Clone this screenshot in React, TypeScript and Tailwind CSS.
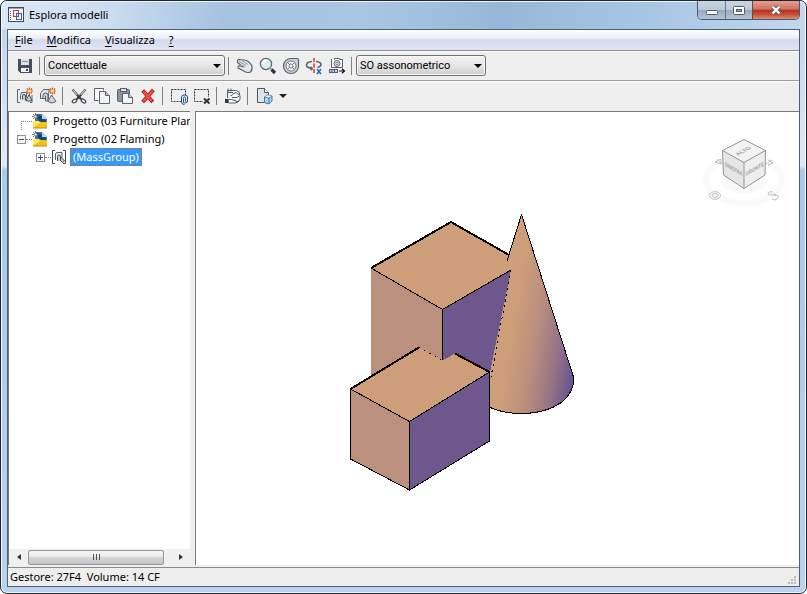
import type { ReactNode } from "react";

// ── Toolbar icons ────────────────────────────────────────────────────────

function Icon({ children, crisp = false }: { children: ReactNode; crisp?: boolean }) {
  return (
    <svg width="18" height="18" viewBox="0 0 18 18" fill="none" shapeRendering={crisp ? "crispEdges" : "auto"} aria-hidden="true">
      {children}
    </svg>
  );
}

function Spark() {
  return (
    <g>
      <path d="M13.5 0.5v7M10 4h7M11 1.5l5 5M16 1.5l-5 5" stroke="#e8501c" strokeWidth="1.2" />
      <rect x="12" y="2.5" width="3" height="3" fill="#ffe27a" />
    </g>
  );
}

const SaveIcon = () => (
  <Icon crisp>
    <path d="M2 2h14v14H4l-2-2z" fill="#474e5e" />
    <rect x="5" y="2" width="8" height="6" fill="#dde1e7" />
    <rect x="6" y="4" width="6" height="1" fill="#8c93a0" />
    <rect x="5" y="11" width="8" height="4" fill="#f2f4f7" />
    <rect x="10" y="12" width="2" height="2" fill="#3b4252" />
  </Icon>
);

const MassGroupIcon = () => (
  <Icon>
    <path d="M4 2.500H1.500v13H4M14 15.500h2V8" stroke="#59616e" />
    <path d="M4.500 12.500V8.500l1-3h5v5" stroke="#59616e" fill="#dfe4ea" />
    <path d="M6.500 12.500V9q0-1.500 1.500-1.500T9.500 9v4.500M10 13.500l3-6 3 6q-3 1.500-6 0z" stroke="#4b5360" fill="#c4cad2" />
    <Spark />
  </Icon>
);

const MassElementIcon = () => (
  <Icon>
    <path d="M1.500 11.500v-5l3-4h6l-1 4v5z" stroke="#59616e" fill="#e3e7ec" />
    <path d="M4 12V8.500Q4 6 6.500 6T9 8.500V14H6.500V9" stroke="#59616e" fill="#c8ced6" />
    <path d="M12.500 8 17 14.500q-4 3-8 0z" stroke="#59616e" fill="#d2d7de" />
    <Spark />
  </Icon>
);

const CutIcon = () => (
  <Icon>
    <path d="M2.500 2.500 11 12M15.500 2.500 7 12" stroke="#5b626e" strokeWidth="2.400" />
    <path d="M3 3l7 8M15 3l-7 8" stroke="#e6e8eb" strokeWidth="0.900" />
    <path d="m7 8 5 5M11 8l-5 5" stroke="#333944" strokeWidth="1.600" />
    <ellipse cx="4.500" cy="14" rx="2.500" ry="1.600" stroke="#454b57" strokeWidth="1.200" transform="rotate(-35 4.500 14)" />
    <ellipse cx="13.500" cy="14" rx="2.500" ry="1.600" stroke="#454b57" strokeWidth="1.200" transform="rotate(35 13.500 14)" />
  </Icon>
);

const CopyIcon = () => (
  <Icon>
    <path d="M5.500 13.500h-4v-12h9v2" stroke="#59616e" fill="#fff" />
    <path d="M6.500 4.500h6l4 4v8h-10z" stroke="#59616e" fill="#f1f3f6" />
    <path d="M12.500 4.500v4h4" stroke="#59616e" fill="#c2c8d0" />
  </Icon>
);

const PasteIcon = () => (
  <Icon>
    <rect x="1.500" y="2.500" width="12" height="12" rx="1" stroke="#59616e" fill="#8d949e" />
    <rect x="4.500" y="1.500" width="6" height="3" stroke="#59616e" fill="#dfe3e8" />
    <path d="M6.500 6.500h6l4 4v6h-10z" stroke="#59616e" fill="#f1f3f6" />
    <path d="M12.500 6.500v4h4" stroke="#59616e" fill="#c2c8d0" />
  </Icon>
);

const DeleteIcon = () => (
  <Icon>
    <path d="M5 5l7.500 8.500M13 4.500 5 13.500" stroke="#b3140e" strokeWidth="3.800" strokeLinecap="square" />
    <path d="M5 5l7.500 8.500M13 4.500 5 13.500" stroke="#f0524a" strokeWidth="2" strokeLinecap="square" />
  </Icon>
);

const SelectIcon = () => (
  <Icon>
    <rect x="1.500" y="2.500" width="14" height="12" stroke="#2f3440" strokeDasharray="2 1" />
    <rect x="11" y="8" width="7" height="10" fill="#efefef" />
    <path d="M15.500 14.500v-3q0-1.500-1-1.500t-1 1.500v3.500q0 1 1 1t3-1V10q0-2-3-2t-3 2v5q0 2.500 3 2.500" stroke="#1c4f8f" />
  </Icon>
);

const DeselectIcon = () => (
  <Icon>
    <rect x="1.500" y="2.500" width="14" height="12" stroke="#2f3440" strokeDasharray="2 1" />
    <rect x="10" y="10" width="8" height="8" fill="#efefef" />
    <path d="m11 11.500 5.500 5M16.500 11.500l-5.500 5" stroke="#333" strokeWidth="2" />
  </Icon>
);

const PropertiesIcon = () => (
  <Icon>
    <path d="M3.500 11V3.500h9l3 2v8l-2 2H8" stroke="#59616e" fill="#edf0f3" />
    <path d="M4 1.500v4M7 1.500v3M3 5.500h6M6.500 8.500h6" stroke="#59616e" />
    <path d="m8 7.500 4-2 4 3v4l-3 2.500-4-2" stroke="#59616e" fill="#f6f7f9" />
    <path d="M8 10.500h5l2-1.500" stroke="#59616e" />
    <path d="M1 12h3v4H1z" fill="#2f3643" />
    <path d="M4.500 12.500h3l5 1.500-1 2h-7z" stroke="#59616e" fill="#fff" />
  </Icon>
);

const ExportIcon = () => (
  <Icon>
    <path d="M2.500 1.500h7l4 4v10h-11z" stroke="#4d5562" fill="#dfe4ea" />
    <path d="M9.500 1.500v4h4" stroke="#4d5562" fill="#fff" />
    <path d="m9.500 10 3-2 4.500 1v5l-3 3-4.500-1.500z" stroke="#467ca8" fill="#a9d2ec" />
    <path d="m9.500 10 4.500 1 3-2M14 11v6" stroke="#467ca8" />
    <path d="m10 9.800 2.500-1.500 4 .8-2.500 1.500z" fill="#eef8ff" />
  </Icon>
);

const PanIcon = () => (
  <Icon>
    <path d="M4.500 8 1.500 5.500Q1 2.500 3 2.500l5 .5q5 .5 8 6 .5 4-1.500 6-4 1.500-7.500-1.500L2 11Q1.500 8.500 4.500 9l3 1" stroke="#5b626e" fill="#e6e9ec" strokeWidth="1.200" />
    <path d="m3 4.500 7 4M6 3.500l6 4M3 7l6 3" stroke="#818894" strokeWidth="0.900" />
  </Icon>
);

const ZoomIcon = () => (
  <Icon>
    <circle cx="7" cy="7" r="5.600" stroke="#5b6673" strokeWidth="1.200" fill="#d9efec" />
    <path d="M3.500 7q.5-3.500 4-3.500" stroke="#fff" strokeWidth="1.800" />
    <path d="m12.500 12.500 3.500 3.500" stroke="#30353d" strokeWidth="3.200" />
    <path d="m11 11 1.500 1.500" stroke="#9ba3ad" strokeWidth="2" />
  </Icon>
);

const WheelIcon = () => (
  <Icon>
    <path d="M9 1.500h6q1.500 0 1.500 1.500v6a7.500 7.500 0 1 1-7.500-7.500z" stroke="#59616e" strokeWidth="1.200" fill="#cfd4db" />
    <circle cx="9" cy="9" r="5" stroke="#6d7581" fill="#f7f8fa" />
    <path d="m5.500 5.500 7 7M12.500 5.500l-7 7" stroke="#6d7581" />
    <circle cx="9" cy="9" r="2" stroke="#6d7581" fill="#fff" />
  </Icon>
);

const OrbitIcon = () => (
  <Icon>
    <path d="M7 4.500Q1.500 5 1.500 8t6 3.500M11 4.500q5 .5 5 3 0 2-3.500 3" stroke="#59616e" strokeWidth="1.600" />
    <path d="m5.500 9 3 2.500-3 2.500z" fill="#59616e" />
    <path d="M9 1v16" stroke="#e02222" strokeWidth="1.400" strokeDasharray="4 1.500" />
    <path d="m12 12 4 5M16 12l-4 5" stroke="#1772cf" strokeWidth="1.600" />
  </Icon>
);

const CameraIcon = () => (
  <Icon>
    <path d="M3.500 2v8.500h11v-8h-3v-1h-5v1" stroke="#59616e" fill="#fff" />
    <circle cx="9" cy="6.500" r="3" stroke="#59616e" fill="#e9ecef" />
    <circle cx="9" cy="6.500" r="1.200" stroke="#7b838f" />
    <rect x="1.500" y="12.500" width="8" height="3" stroke="#59616e" fill="#c5cad1" />
    <path d="M4 12.500v3M6.500 12.500v3" stroke="#59616e" />
    <path d="M11 14h5M14 11.800 16.500 14 14 16.200" stroke="#111" strokeWidth="1.200" />
  </Icon>
);

// ── Small building blocks ────────────────────────────────────────────────

function ToolButton({ label, children }: { label: string; children: ReactNode }) {
  return (
    <button type="button" aria-label={label} title={label} className="flex h-[22px] w-[23px] shrink-0 items-center justify-center">
      {children}
    </button>
  );
}

const Sep = () => <div className="mr-[4px] ml-[3px] h-[18px] w-px shrink-0 bg-[#808080]" />;

function Combo({ label, options, className }: { label: string; options: string[]; className: string }) {
  return (
    <div className={`relative shrink-0 ${className}`}>
      <select
        aria-label={label}
        className="h-[21px] w-full appearance-none rounded-[3px] border border-[#707070] bg-linear-to-b from-[#f3f3f3] via-[#e6e6e6] to-[#cfcfcf] px-[3px] font-[Roboto,sans-serif] text-[11px] leading-[16px] text-black shadow-[inset_0_0_0_1px_#f8f8f8]"
      >
        {options.map((o) => <option key={o}>{o}</option>)}
      </select>
      <svg className="pointer-events-none absolute top-[9px] right-[4px]" width="8" height="4" viewBox="0 0 8 4" aria-hidden="true">
        <path d="M0 0h8L4 4z" fill="#000" />
      </svg>
    </div>
  );
}

function ProjectIcon() {
  return (
    <svg width="16" height="16" viewBox="0 0 16 16" className="shrink-0" aria-hidden="true">
      <path d="M3 1h7l5 5v7H3z" fill="#3f78a8" />
      <path d="M5 2q6 0 9 6v3L7 9z" fill="#17456f" />
      <path d="M10 1v5h5z" fill="#bcd7ea" />
      <path d="M1 8h5l2 1h7v6H1z" fill="#f2c316" />
      <path d="M1 8h5l3 1-8 6z" fill="#ffe65c" />
      <path d="M1 15.500h14v-1H1z" fill="#b78a10" />
      <path d="M3.500 0v7M0 3.500h7M1 1l5 5M6 1 1 6" stroke="#56606e" strokeWidth="0.900" />
      <rect x="2.500" y="2.500" width="2" height="2" fill="#fff" />
    </svg>
  );
}

function GroupNodeIcon() {
  return (
    <svg width="14" height="14" viewBox="0 0 14 14" fill="none" className="shrink-0" aria-hidden="true">
      <path d="M3 .5H.5v13H3M11 .5h2.500v13H11" stroke="#3f4653" />
      <path d="M3.500 10V4l1-1.500h5.500v5" stroke="#59616e" fill="#e9ecf0" />
      <path d="M5.500 11V6.500q0-1.500 1.500-1.500t1.500 1.500V11M8.500 6.500l4 4.500-2 1.500-2-2" stroke="#4b5360" fill="#c4cad2" />
    </svg>
  );
}

function Expander({ open }: { open: boolean }) {
  return (
    <button type="button" aria-label={open ? "Comprimi" : "Espandi"} className="shrink-0">
      <svg width="9" height="9" viewBox="0 0 9 9" fill="none" shapeRendering="crispEdges" aria-hidden="true">
        <rect x=".5" y=".5" width="8" height="8" stroke="#919191" fill="#f6f6f6" />
        <path d={open ? "M2 4.500h5" : "M2 4.500h5M4.500 2v5"} stroke="#33509c" />
      </svg>
    </button>
  );
}

// ── 3D viewport ──────────────────────────────────────────────────────────

function Model() {
  return (
    <svg width="226" height="281" viewBox="349 211 226 281" className="shrink-0" shapeRendering="crispEdges" role="img" aria-label="Modello">
      <defs>
        <linearGradient id="cone" gradientUnits="userSpaceOnUse" x1="505" y1="380" x2="574" y2="391">
          <stop offset="0" stopColor="#cd9e79" />
          <stop offset="0.35" stopColor="#b98e7e" />
          <stop offset="0.7" stopColor="#937086" />
          <stop offset="1" stopColor="#5f5093" />
        </linearGradient>
      </defs>

      {/* back box */}
      <path d="M371 268 451 222 509 255 506 265 511 270 442.500 309.500z" fill="#cd9e79" />
      <path d="M371 268 442.500 309.500V361L371 390z" fill="#bc907e" />
      <path d="M442.500 309.500 511 270 490 380 442 361z" fill="#6d578c" />
      <path d="m371 268 80-46 58 33" stroke="#000" strokeWidth="2" fill="none" />
      <path d="m371 268 71.500 41.500L511 270M442.500 309.500V361" stroke="#000" fill="none" />

      {/* cone */}
      <path d="M521.500 214.500 573.500 377Q575 391 562 402 546 413.500 521.500 413.500 503 413.500 489 407V377L511 270 506 265z" fill="url(#cone)" />
      <path d="M507 261 521.500 214.500 573.500 377Q575 391 562 402 546 413.500 521.500 413.500 503 413.500 489 407" stroke="#000" strokeLinejoin="bevel" fill="none" />
      <path d="m511 270-20 107" stroke="#000" strokeDasharray="2 4" fill="none" />

      {/* front box */}
      <path d="M350.500 389 419 347.500 442.500 360.500 455 353.500 489.500 372 409.500 421.500z" fill="#cd9e79" />
      <path d="M350.500 389 409.500 421.500V490L350.500 459z" fill="#bc907e" />
      <path d="M409.500 421.500 489.500 372V441L409.500 490z" fill="#6d578c" />
      <path d="m350.500 389 68.500-41.500M455 353.500l34.500 18.500" stroke="#000" strokeWidth="2" fill="none" />
      <path d="m419 347.500 23.500 13" stroke="#000" strokeDasharray="1 5" fill="none" />
      <path d="m350.500 389 59 32.500 80-49.500V441l-80 49-59-31zM409.500 421.500V490" stroke="#000" fill="none" />
    </svg>
  );
}

function ViewCube() {
  return (
    <svg width="84" height="76" viewBox="704 134 84 76" className="absolute top-[22px] right-[12px]" role="img" aria-label="ViewCube">
      <ellipse cx="745" cy="180" rx="38" ry="23" fill="none" stroke="#fafafa" strokeWidth="6" />
      <ellipse cx="745" cy="182" rx="23" ry="11" fill="#f9f9f9" />
      <g fill="none" stroke="#bdbdbd">
        <path d="m716 162 6-3v5zM718 159l5 5M769 160l5 3-5 2M767 164l6-4" />
        <ellipse cx="716" cy="195.500" rx="5.500" ry="3.800" />
        <ellipse cx="716" cy="195.500" rx="3" ry="1.800" />
        <path d="M774 192q-4-1-5 1t4 2 6 1-1 3-5 0M774 194q2-1 4 2" />
      </g>
      <path d="m723.500 150.500 21.500-11 21.500 11L745 162.500z" fill="#f3f3f3" />
      <path d="M723.500 150.500 745 162.500v26L724.500 175z" fill="#e6e6e6" />
      <path d="M766.500 150.500 745 162.500v26L766 175z" fill="#eeeeee" />
      <path d="m723.500 150.500 21.500-11 21.500 11L745 162.500zM723.500 150.500l1 24.500L745 188.500 766 175l.5-24.500M745 162.500v26" fill="none" stroke="#939393" />
      <g fontFamily="Liberation Sans, sans-serif" fontSize="6" fontWeight="700" fill="#a0a0a0" textAnchor="middle">
        <text transform="matrix(.87 -.47 .87 .47 746 152)">ALTO</text>
        <text fontSize="5" transform="matrix(.75 .44 0 1.200 734.500 171)">SINISTRA</text>
        <text fontSize="5" transform="matrix(.85 -.5 0 1.200 756 171)">FRONTE</text>
      </g>
    </svg>
  );
}

// ── Window ───────────────────────────────────────────────────────────────

const MENU = [
  { key: "F", rest: "ile" },
  { key: "M", rest: "odifica" },
  { key: "V", rest: "isualizza" },
  { key: "?", rest: "" },
];

export default function App() {
  return (
    <div className="bg-white">
      <div className="flex min-h-screen flex-col rounded-[7px] border border-[#20262e] bg-[linear-gradient(to_bottom,#d8e6f4_0,#c3d7ec_30px,#dfeaf6_165px,#a9c9e9_169px,#b9d3ec_100%)] px-[6px] pb-[6px] font-['Noto_Sans',sans-serif] text-[11px] leading-[16px] text-black shadow-[inset_0_0_0_1px_#f3f8fd]">
        {/* title bar */}
        <header className="-mx-[5px] flex h-[28px] shrink-0 items-start justify-between rounded-t-[6px] bg-[linear-gradient(100deg,#dce8f4_0%,#c9dcf0_14%,#a5c2e0_28%,#a9c6e4_45%,#98b7d8_62%,#a7c5e4_80%,#c2d8ee_100%)] pl-[6px] shadow-[inset_0_1px_0_#eff6fc]">
          <div className="flex items-center gap-[5px] pt-[6px]">
            <svg width="16" height="16" viewBox="0 0 16 16" fill="none" shapeRendering="crispEdges" aria-hidden="true">
              <rect x=".5" y=".5" width="15" height="14" fill="#f6f8fb" stroke="#3d4c60" />
              <rect x="1" y="1" width="14" height="1" fill="#8fa0b4" />
              <path d="M2.500 4v9" stroke="#52627a" strokeDasharray="1 1" />
              <rect x="5.500" y="3.500" width="5" height="6" stroke="#c93a32" />
              <rect x="8.500" y="6.500" width="5" height="6" fill="#e8f2fc" stroke="#2768ad" />
              <path d="M8 9.500h2.500V6" stroke="#c93a32" />
            </svg>
            <h1 className="font-normal">Esplora modelli</h1>
          </div>
          <div className="mr-[5px] flex h-[19px] overflow-hidden rounded-b-[5px] border border-t-0 border-[#4b5b6d]">
            <button type="button" aria-label="Riduci a icona" className="flex w-[28px] items-center justify-center border-r border-[#667789] bg-[linear-gradient(#c9d5e1_0%,#b9c8d8_48%,#96aabe_50%,#b2c5d8_100%)]">
              <svg width="12" height="5" viewBox="0 0 12 5" className="mt-[4px]" aria-hidden="true">
                <rect x=".5" y=".5" width="11" height="4" rx="1" fill="#fff" stroke="#535a66" />
              </svg>
            </button>
            <button type="button" aria-label="Ingrandisci" className="flex w-[27px] items-center justify-center border-r border-[#5b4b50] bg-[linear-gradient(#c9d5e1_0%,#b9c8d8_48%,#96aabe_50%,#b2c5d8_100%)]">
              <svg width="12" height="9" viewBox="0 0 12 9" aria-hidden="true">
                <rect x=".5" y=".5" width="11" height="8" rx="1" fill="#fff" stroke="#535a66" />
                <rect x="3.500" y="3.500" width="5" height="2" fill="#9aadc0" stroke="#535a66" />
              </svg>
            </button>
            <button type="button" aria-label="Chiudi" className="flex w-[46px] items-center justify-center bg-[linear-gradient(#e3a094_0%,#d0725f_46%,#b6301c_50%,#c2503a_75%,#e08f72_100%)]">
              <svg width="12" height="10" viewBox="0 0 12 10" aria-hidden="true">
                <path d="m2.500 1.500 7 7M9.500 1.500l-7 7" stroke="#535a66" strokeWidth="4" />
                <path d="m2.500 1.500 7 7M9.500 1.500l-7 7" stroke="#fff" strokeWidth="2.400" />
              </svg>
            </button>
          </div>
        </header>

        <main className="flex flex-1 flex-col border border-[#4d6075] bg-[#efefef]">
          <nav className="flex h-[20px] shrink-0 items-center gap-[14px] bg-[linear-gradient(#ffffff_0%,#eceff8_40%,#d5dbed_50%,#e0e6f4_100%)] pl-[7px]">
            {MENU.map(({ key, rest }) => (
              <button key={key} type="button"><span className="underline underline-offset-2">{key}</span>{rest}</button>
            ))}
          </nav>

          <div role="toolbar" aria-label="Vista" className="flex h-[30px] shrink-0 items-center border-t border-[#8f8f8f] pl-[5px] shadow-[inset_0_1px_0_#ffffff]">
            <ToolButton label="Salva"><SaveIcon /></ToolButton>
            <Sep />
            <Combo label="Stile di visualizzazione" options={["Concettuale"]} className="w-[181px]" />
            <Sep />
            <ToolButton label="Pan"><PanIcon /></ToolButton>
            <ToolButton label="Zoom"><ZoomIcon /></ToolButton>
            <ToolButton label="SteeringWheel"><WheelIcon /></ToolButton>
            <ToolButton label="Orbita"><OrbitIcon /></ToolButton>
            <ToolButton label="Cinepresa"><CameraIcon /></ToolButton>
            <Sep />
            <Combo label="Vista" options={["SO assonometrico"]} className="w-[130px]" />
          </div>

          <div role="toolbar" aria-label="Modello" className="flex h-[31px] shrink-0 items-center border-t border-[#9d9d9d] pl-[5px] shadow-[inset_0_1px_0_#ffffff]">
            <ToolButton label="Nuovo gruppo"><MassGroupIcon /></ToolButton>
            <ToolButton label="Nuovo elemento"><MassElementIcon /></ToolButton>
            <Sep />
            <ToolButton label="Taglia"><CutIcon /></ToolButton>
            <ToolButton label="Copia"><CopyIcon /></ToolButton>
            <ToolButton label="Incolla"><PasteIcon /></ToolButton>
            <ToolButton label="Elimina"><DeleteIcon /></ToolButton>
            <Sep />
            <ToolButton label="Associa"><SelectIcon /></ToolButton>
            <ToolButton label="Dissocia"><DeselectIcon /></ToolButton>
            <Sep />
            <ToolButton label="Opzioni"><PropertiesIcon /></ToolButton>
            <Sep />
            <ToolButton label="Esporta"><ExportIcon /></ToolButton>
            <button type="button" aria-label="Altre opzioni" className="flex h-[22px] w-[16px] items-center justify-center">
              <svg width="8" height="4" viewBox="0 0 8 4" aria-hidden="true"><path d="M0 0h8L4 4z" fill="#222" /></svg>
            </button>
          </div>

          <div className="flex flex-1">
            {/* tree */}
            <aside className="flex w-[182px] shrink-0 flex-col overflow-hidden border-t border-l border-[#7a7a7a] bg-white">
              <ul className="flex flex-1 flex-col whitespace-nowrap">
                <li className="flex h-[18px] items-center pl-[12px]">
                  <span className="mt-[9px] h-[9px] w-[11px] shrink-0 border-t border-l border-dotted border-[#808080]" />
                  <ProjectIcon />
                  <span className="ml-[5px]">Progetto (03 Furniture Plan)</span>
                </li>
                <li className="flex flex-col">
                  <div className="flex h-[18px] items-center pl-[8px]">
                    <Expander open />
                    <span className="h-px w-[6px] shrink-0 border-t border-dotted border-[#808080]" />
                    <ProjectIcon />
                    <span className="ml-[5px]">Progetto (02 Flaming)</span>
                  </div>
                  <ul>
                    <li className="flex h-[18px] items-center pl-[27px]">
                      <Expander open={false} />
                      <span className="mr-px h-px w-[6px] shrink-0 border-t border-dotted border-[#808080]" />
                      <GroupNodeIcon />
                      <span className="ml-[4px] border border-dotted border-[#c0651a] bg-[#3399ff] px-[2px] text-white">(MassGroup)</span>
                    </li>
                  </ul>
                </li>
              </ul>
              <div className="flex h-[16px] shrink-0 items-center bg-[#f0f0f0]">
                <button type="button" aria-label="Scorri a sinistra" className="flex w-[19px] justify-center">
                  <svg width="4" height="6" viewBox="0 0 4 6" className="shrink-0" aria-hidden="true"><path d="M4 0v6L0 3z" fill="#333" /></svg>
                </button>
                <div className="flex h-[15px] flex-1 items-center justify-center gap-[2px] rounded-[2px] border border-[#979797] bg-[linear-gradient(#f5f5f5_0%,#e9e9eb_48%,#d6d6d8_50%,#c4c4c6_100%)]">
                  <span className="h-[6px] w-px bg-[#555]" />
                  <span className="h-[6px] w-px bg-[#555]" />
                  <span className="h-[6px] w-px bg-[#555]" />
                </div>
                <button type="button" aria-label="Scorri a destra" className="flex w-[26px] justify-end pr-[7px]">
                  <svg width="4" height="6" viewBox="0 0 4 6" className="shrink-0" aria-hidden="true"><path d="M0 0v6l4-3z" fill="#333" /></svg>
                </button>
              </div>
            </aside>

            <section className="relative ml-[5px] flex-1 overflow-hidden border-t border-l border-[#7a7a7a] bg-white pt-[99px] pl-[153px]">
              <Model />
              <ViewCube />
            </section>
          </div>

          <footer className="mt-[2px] flex h-[19px] shrink-0 items-center justify-between border-t border-[#8a8a8a] bg-[#f0eded] pl-[2px]">
            <span className="whitespace-pre">Gestore: 27F4  Volume: 14 CF</span>
            <svg width="9" height="9" viewBox="0 0 9 9" className="mt-[6px] mr-[2px]" fill="#bdb9b9" aria-hidden="true">
              <path d="M6 0h2v2H6zM3 3h2v2H3zM6 3h2v2H6zM0 6h2v2H0zM3 6h2v2H3zM6 6h2v2H6z" />
            </svg>
          </footer>
        </main>
      </div>
    </div>
  );
}
